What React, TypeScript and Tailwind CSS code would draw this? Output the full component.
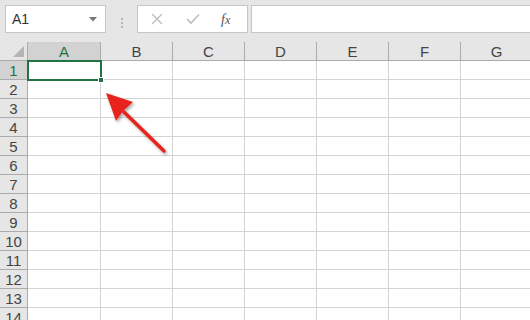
import React from "react";

const cols = ["A", "B", "C", "D", "E", "F", "G"];
const colWidths = [73, 72, 72, 72, 72, 72, 72];
const rows = Array.from({ length: 14 }, (_, i) => i + 1);

export default function App() {
  return (
    <div
      className="relative w-[530px] h-[320px] overflow-hidden bg-white"
      style={{ fontFamily: '"Liberation Sans", "Noto Sans CJK SC", sans-serif' }}
    >
      {/* Formula bar */}
      <div className="flex h-[42px] bg-[#e6e6e6] pt-[5px] pl-[5px]">
        <div className="flex h-[28px] w-[101px] items-center justify-between border border-[#c6c6c6] bg-white pl-[6px] pr-[8px]">
          <span className="text-[14px] text-[#333]">A1</span>
          <svg width="8" height="5" viewBox="0 0 8 5">
            <path d="M0 0 L8 0 L4 4.5 Z" fill="#777" />
          </svg>
        </div>
        <div className="flex w-[31px] flex-col items-center justify-center gap-[2px] pb-[2px]">
          <span className="h-[2px] w-[2px] bg-[#b5b5b5]" />
          <span className="h-[2px] w-[2px] bg-[#b5b5b5]" />
          <span className="h-[2px] w-[2px] bg-[#b5b5b5]" />
        </div>
        <div className="flex h-[28px] w-[111px] items-center border border-[#c6c6c6] bg-white">
          <svg className="ml-[13px]" width="12" height="12" viewBox="0 0 12 12">
            <path d="M1 1 L11 11 M11 1 L1 11" stroke="#bdbdbd" strokeWidth="1.4" />
          </svg>
          <svg className="ml-[23px]" width="14" height="12" viewBox="0 0 14 12">
            <path d="M1 6 L5 10 L13 1.5" stroke="#bdbdbd" strokeWidth="1.6" fill="none" />
          </svg>
          <span
            className="ml-[21px] text-[14px] italic text-[#555]"
            style={{ fontFamily: '"Liberation Serif", serif' }}
          >
            f<span className="text-[12px]">x</span>
          </span>
        </div>
        <div className="ml-[3px] h-[28px] flex-1 border border-r-0 border-[#c6c6c6] bg-white" />
      </div>

      {/* Sheet */}
      <div className="flex flex-col text-[#444]">
        {/* Column headers */}
        <div className="flex h-[19px] border-b border-[#ababab] bg-[#e6e6e6]">
          <div className="relative w-[28px] shrink-0 border-r border-[#ababab]">
            <svg className="absolute bottom-[3px] right-[3px]" width="11" height="11" viewBox="0 0 11 11">
              <path d="M11 0 L11 11 L0 11 Z" fill="#b4b4b4" />
            </svg>
          </div>
          {cols.map((c, i) => (
            <div
              key={c}
              style={{ width: colWidths[i] }}
              className={`shrink-0 flex items-end justify-center border-r text-[15px] leading-none pb-[1px] ${
                i === 0
                  ? "bg-[#d2d2d2] border-[#ababab] text-[#217346]"
                  : "border-[#ababab]"
              }`}
            >
              {c}
            </div>
          ))}
        </div>

        {rows.map((r) => (
          <div key={r} className="flex h-[19px] shrink-0">
            <div
              className={`w-[28px] shrink-0 flex items-end justify-center border-r border-b border-[#ababab] text-[15px] leading-none pb-[1px] ${
                r === 1 ? "bg-[#d2d2d2] text-[#217346]" : "bg-[#e6e6e6]"
              }`}
            >
              {r}
            </div>
            {cols.map((c, i) => (
              <div
                key={c}
                style={{ width: colWidths[i] }}
                className="shrink-0 border-r border-b border-[#d4d4d4]"
              />
            ))}
          </div>
        ))}
      </div>

      {/* Selection box */}
      <div className="absolute left-[27px] top-[60px] h-[21px] w-[75px] border-2 border-[#217346]" />
      <div className="absolute left-[98px] top-[77px] h-[6px] w-[6px] border border-white bg-[#217346]" />

      {/* Arrow */}
      <svg className="absolute left-0 top-0" width="530" height="320" viewBox="0 0 530 320">
        <defs>
          <filter id="sh" x="-50%" y="-50%" width="200%" height="200%">
            <feDropShadow dx="1.5" dy="2" stdDeviation="1.5" floodColor="#000" floodOpacity="0.35" />
          </filter>
        </defs>
        <g filter="url(#sh)">
          <path d="M164 151 L124 112" stroke="#e8231c" strokeWidth="3.5" strokeLinecap="round" />
          <path d="M106 93 L133 102 L123 111 L116 121 Z" fill="#e8231c" />
        </g>
      </svg>
    </div>
  );
}
